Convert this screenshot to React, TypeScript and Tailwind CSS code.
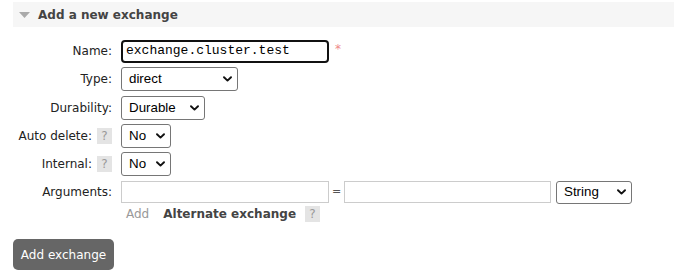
import React from "react";

function Chevron() {
  return (
    <svg width="9" height="6" viewBox="0 0 9 6" className="shrink-0">
      <path d="M1 1.2 L4.5 4.6 L8 1.2" fill="none" stroke="#111" strokeWidth="1.9" strokeLinecap="round" strokeLinejoin="round" />
    </svg>
  );
}

function Select({ value, width, height = "h-[24px]" }: { value: string; width: string; height?: string }) {
  return (
    <div
      className={`${width} ${height} flex items-center justify-between pl-[7px] pr-[5px] border border-[#767676] rounded-[3px] bg-white text-[13.33px] text-black`}
      style={{ fontFamily: '"Liberation Sans", Arial, sans-serif' }}
    >
      <span>{value}</span>
      <Chevron />
    </div>
  );
}

function Help() {
  return (
    <span className="inline-flex items-center justify-center w-[15px] h-[16px] bg-[#e4e4e4] text-[#999] text-[12px] leading-none">?</span>
  );
}

function Label({ children }: { children: React.ReactNode }) {
  return <div className="flex items-center justify-end gap-[5px] text-[12px] text-[#222]">{children}</div>;
}

export default function App() {
  return (
    <div className="w-[674px] h-[274px] bg-white pt-[2px]" style={{ fontFamily: '"DejaVu Sans", Verdana, sans-serif' }}>
      {/* Section header */}
      <div className="ml-[13px] h-[25px] bg-[#f6f6f6] flex items-center">
        <svg width="11" height="6" viewBox="0 0 11 6" className="ml-[6px] mr-[8px]">
          <path d="M0 0 L11 0 L5.5 6 Z" fill="#aaa" />
        </svg>
        <span className="text-[12px] font-bold text-[#444]">Add a new exchange</span>
      </div>

      {/* Form */}
      <div className="mt-[10px] grid grid-cols-[112px_1fr] gap-x-[9px]">
        <Label>Name:</Label>
        <div className="h-[28px] flex items-center">
          <div
            className="w-[208px] h-[23px] border-2 border-[#111] rounded-[4px] flex items-center pl-[3px] text-[13px] text-black"
            style={{ fontFamily: '"Liberation Mono", "Courier New", monospace' }}
          >
            exchange.cluster.test
          </div>
          <span className="ml-[6px] -mt-[4px] text-[#e88] text-[12px]">*</span>
        </div>

        <Label>Type:</Label>
        <div className="h-[28px] flex items-center">
          <Select value="direct" width="w-[117px]" />
        </div>

        <Label>Durability:</Label>
        <div className="h-[29px] flex items-center">
          <Select value="Durable" width="w-[84px]" />
        </div>

        <Label>
          Auto delete: <Help />
        </Label>
        <div className="h-[28px] flex items-center">
          <Select value="No" width="w-[50px]" />
        </div>

        <Label>
          Internal: <Help />
        </Label>
        <div className="h-[28px] flex items-center">
          <Select value="No" width="w-[50px]" />
        </div>

        <Label>Arguments:</Label>
        <div className="h-[28px] flex items-center">
          <div className="w-[208px] h-[22px] border border-[#ccc] bg-white" />
          <span className="w-[15px] text-center text-[11px] text-[#555]">=</span>
          <div className="w-[207px] h-[22px] border border-[#ccc] bg-white" />
          <div className="ml-[5px]">
            <Select value="String" width="w-[76px]" height="h-[23px]" />
          </div>
        </div>

        <div />
        <div className="h-[16px] flex items-center">
          <span className="ml-[5px] text-[12px] text-[#999]">Add</span>
          <span className="ml-[14px] text-[12px] font-bold text-[#444]">Alternate exchange</span>
          <span className="ml-[9px] flex">
            <Help />
          </span>
        </div>
      </div>

      <button className="mt-[17px] ml-[13px] w-[101px] h-[31px] rounded-[5px] bg-[#666] text-white text-[12px] flex items-center justify-center">
        Add exchange
      </button>
    </div>
  );
}
